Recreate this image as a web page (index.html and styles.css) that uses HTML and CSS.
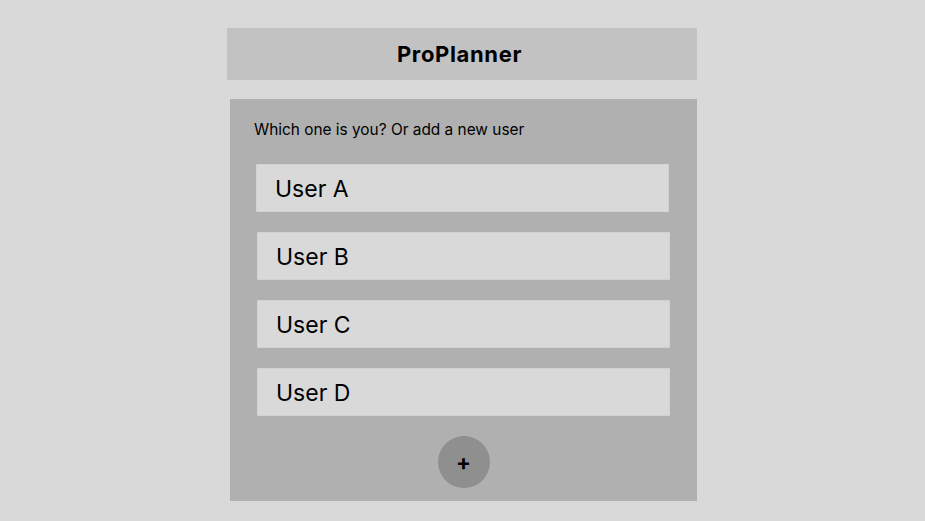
FILE: index.html
```html
<!DOCTYPE html>
<html lang="en">
<head>
<meta charset="utf-8">
<title>ProPlanner</title>
<link rel="stylesheet" href="styles.css">
</head>
<body>
<div class="app">
  <header class="topbar"><h1 class="title">ProPlanner</h1></header>
  <main class="panel">
    <p class="prompt">Which one is you? Or add a new user</p>
    <ul class="users">
      <li class="user user-first">User A</li>
      <li class="user">User B</li>
      <li class="user">User C</li>
      <li class="user">User D</li>
    </ul>
    <button class="add" type="button">+</button>
  </main>
</div>
</body>
</html>
```

FILE: styles.css
```css
html, body {
  margin: 0;
  padding: 0;
  background: #d9d9d9;
  font-family: Inter, "Noto Sans", sans-serif;
  color: #000;
}
.app {
  width: 470px;
  margin: 0 0 0 227px;
  padding-top: 28px;
  display: flex;
  flex-direction: column;
  gap: 19px;
}
.topbar {
  height: 52px;
  background: #c2c2c2;
  display: flex;
  align-items: center;
  justify-content: center;
}
.title {
  margin: 0 5px 0 0;
  font-size: 22px;
  font-weight: 700;
  letter-spacing: 0.65px;
  line-height: 1;
}
.panel {
  margin-left: 3px;
  height: 402px;
  box-sizing: border-box;
  background: #b0b0b0;
  padding: 21px 27px 0 24px;
  display: flex;
  flex-direction: column;
}
.prompt {
  margin: 0;
  font-size: 15.4px;
  line-height: 20px;
}
.users {
  list-style: none;
  margin: 24px 0 0 3px;
  padding: 0;
  display: flex;
  flex-direction: column;
  gap: 20px;
}
.user {
  height: 48px;
  box-sizing: border-box;
  background: #d9d9d9;
  border: 1px solid #d2d2d2;
  padding: 2px 0 0 18px;
  display: flex;
  align-items: center;
  font-size: 23px;
}
.user-first {
  margin-left: -1px;
  margin-right: 1px;
}
.add {
  align-self: center;
  margin: 20px 0 0 3px;
  width: 52px;
  height: 52px;
  border-radius: 50%;
  border: none;
  background: #8f8f8f;
  color: #000;
  font-family: Inter, sans-serif;
  font-size: 22px;
  font-weight: 700;
  line-height: 1;
  padding: 0;
}
```
